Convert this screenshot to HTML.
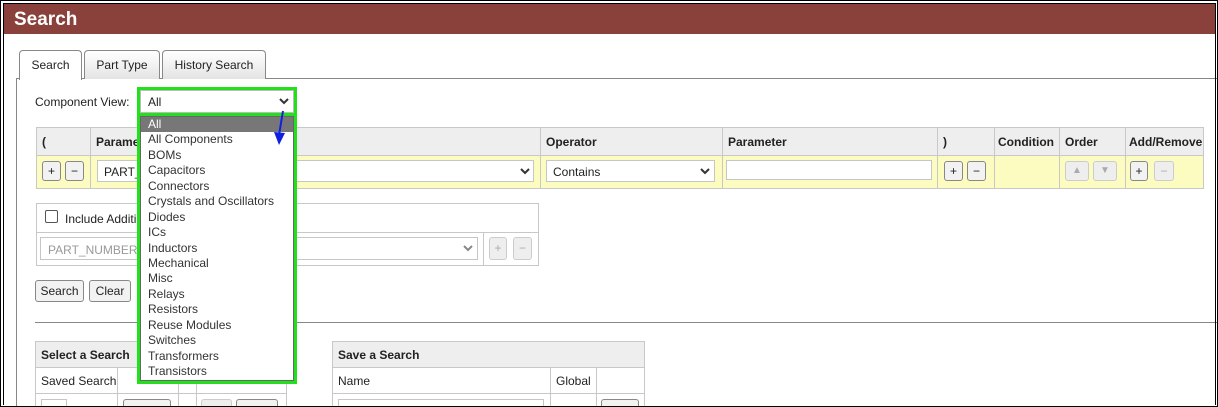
<!DOCTYPE html>
<html><head><style>
*{box-sizing:border-box;margin:0;padding:0}
html,body{width:1218px;height:407px;overflow:hidden;background:#fff}
body{font-family:"Liberation Sans",sans-serif;font-size:12px;color:#222}
#w{position:relative;width:1218px;height:407px;overflow:hidden}
.a{position:absolute}
.frame{left:0;top:0;width:1218px;height:407px;border:1px solid #000;z-index:20}
.inner{left:3px;top:3px;width:1213px;height:402px;border:1px solid #000;border-bottom:none;z-index:20}
.hdr{left:4px;top:4px;width:1211px;height:30px;background:#8a403b;color:#fff;font-weight:bold;font-size:19px;padding:5px 0 0 10px}
.tab{top:50px;height:29px;border:1px solid #888;border-bottom:none;border-radius:4px 4px 0 0;background:linear-gradient(#fff,#e4e4e4);padding:7px 0 0;text-align:center}
.c{border:1px solid #c6c6c6;background:#fff}
.btn{border:1px solid #888;border-radius:3px;background:#f2f2f2;text-align:center;font-size:12px}
.dis{border:1px solid #ccc;border-radius:3px;background:#eee;color:#aaa;text-align:center}
table{border-collapse:collapse;position:absolute;table-layout:fixed}
td,th{border:1px solid #c8c8c8;text-align:left;font-weight:bold;padding:0 5px;white-space:nowrap;overflow:hidden}
.opt{height:15.44px;line-height:15px;padding-left:7px;color:#333}
</style></head><body><div id="w">
<div class="a frame"></div><div class="a inner"></div>
<div class="a hdr">Search</div>
<div class="a" style="left:16px;top:78px;width:1202px;height:329px;border-top:1px solid #888;border-left:1px solid #888"></div>
<div class="a tab" style="left:19px;width:63px;background:#fff;height:30px">Search</div>
<div class="a tab" style="left:84px;width:76px">Part Type</div>
<div class="a tab" style="left:162px;width:104px">History Search</div>

<div class="a" style="left:35px;top:95px">Component View:</div>

<table style="left:36px;top:127px;width:1167px">
<colgroup><col style="width:54px"><col style="width:450px"><col style="width:182px"><col style="width:215px"><col style="width:57px"><col style="width:65px"><col style="width:66px"><col style="width:78px"></colgroup>
<tr style="background:#eee;height:28px"><th>(</th><th>Parameter</th><th>Operator</th><th>Parameter</th><th>)</th><th style="padding:0 3px">Condition</th><th>Order</th><th style="padding:0 3px">Add/Remove</th></tr>
<tr style="background:#fdfcc0;height:33px"><td></td><td></td><td></td><td></td><td></td><td></td><td></td><td></td></tr>
</table>
<div class="a btn" style="left:42px;top:161px;width:19px;height:20px;line-height:18px">+</div>
<div class="a btn" style="left:65px;top:161px;width:19px;height:20px;line-height:18px">−</div>
<div class="a c" style="left:97px;top:160px;width:437px;height:22px;padding:4px 6px">PART_N</div>
<div class="a c" style="left:546px;top:160px;width:169px;height:22px;padding:4px 6px">Contains</div>
<svg class="a" style="left:520px;top:168px" width="10" height="7"><path d="M1 1l4 4 4-4" stroke="#333" stroke-width="2" fill="none"/></svg>
<svg class="a" style="left:700px;top:168px" width="10" height="7"><path d="M1 1l4 4 4-4" stroke="#333" stroke-width="2" fill="none"/></svg>
<div class="a c" style="left:726px;top:160px;width:206px;height:20px"></div>
<div class="a btn" style="left:944px;top:161px;width:19px;height:20px;line-height:18px">+</div>
<div class="a btn" style="left:967px;top:161px;width:19px;height:20px;line-height:18px">−</div>
<div class="a dis" style="left:1065px;top:161px;width:24px;height:20px;line-height:18px;font-size:10px">▲</div>
<div class="a dis" style="left:1093px;top:161px;width:24px;height:20px;line-height:18px;font-size:10px">▼</div>
<div class="a btn" style="left:1130px;top:161px;width:18px;height:20px;line-height:18px">+</div>
<div class="a dis" style="left:1154px;top:161px;width:20px;height:20px;line-height:18px">−</div>

<div class="a" style="left:36px;top:203px;width:503px;height:63px;border:1px solid #c8c8c8"></div>
<div class="a" style="left:36px;top:232px;width:503px;border-top:1px solid #c8c8c8"></div>
<div class="a" style="left:483px;top:232px;height:34px;border-left:1px solid #c8c8c8"></div>
<div class="a" style="left:45px;top:210px;width:13px;height:13px;border:1px solid #555;border-radius:2px"></div>
<div class="a" style="left:65px;top:212px">Include Additi</div>
<div class="a c" style="left:40px;top:237px;width:438px;height:23px;padding:5px 7px;color:#999">PART_NUMBER</div>
<svg class="a" style="left:463px;top:245px" width="10" height="7"><path d="M1 1l4 4 4-4" stroke="#888" stroke-width="2" fill="none"/></svg>
<div class="a dis" style="left:489px;top:237px;width:18px;height:23px;line-height:21px">+</div>
<div class="a dis" style="left:513px;top:237px;width:19px;height:23px;line-height:21px">−</div>

<div class="a btn" style="left:35px;top:280px;width:49px;height:22px;line-height:20px">Search</div>
<div class="a btn" style="left:89px;top:280px;width:42px;height:22px;line-height:20px">Clear</div>
<div class="a" style="left:35px;top:322px;width:1183px;border-top:1px solid #888"></div>

<table style="left:35px;top:341px;width:251px">
<colgroup><col style="width:82px"><col style="width:61px"><col style="width:18px"><col style="width:90px"></colgroup>
<tr style="background:#eee;height:26px"><th colspan="4">Select a Search</th></tr>
<tr style="height:26px"><td style="font-weight:normal">Saved Search</td><td></td><td></td><td></td></tr>
<tr style="height:26px"><td></td><td></td><td></td><td></td></tr>
</table>
<table style="left:332px;top:341px;width:312px">
<colgroup><col style="width:218px"><col style="width:46px"><col style="width:48px"></colgroup>
<tr style="background:#eee;height:26px"><th colspan="3">Save a Search</th></tr>
<tr style="height:26px"><td style="font-weight:normal">Name</td><td style="font-weight:normal">Global</td><td></td></tr>
<tr style="height:26px"><td></td><td></td><td></td></tr>
</table>
<div class="a btn" style="left:123px;top:399px;width:48px;height:14px"></div>
<div class="a c" style="left:41px;top:399px;width:26px;height:14px"></div>
<div class="a dis" style="left:201px;top:399px;width:31px;height:14px"></div>
<div class="a btn" style="left:236px;top:399px;width:42px;height:14px"></div>
<div class="a c" style="left:338px;top:399px;width:206px;height:14px"></div>
<div class="a btn" style="left:601px;top:399px;width:38px;height:14px"></div>

<div class="a" style="left:137px;top:87px;width:160px;height:29px;border:3px solid #22e11c"></div>
<div class="a c" style="left:140px;top:90px;width:154px;height:23px;padding:4px 7px;border-color:#bbb">All</div>
<svg class="a" style="left:279px;top:98px" width="10" height="7"><path d="M1 1l4 4 4-4" stroke="#333" stroke-width="2" fill="none"/></svg>
<div class="a" style="left:137px;top:113px;width:160px;height:271px;border:3px solid #22e11c;background:#fff">
<div style="border:1px solid #666;height:265px">
<div class="opt" style="background:#777;color:#fff">All</div>
<div class="opt">All Components</div><div class="opt">BOMs</div><div class="opt">Capacitors</div><div class="opt">Connectors</div><div class="opt">Crystals and Oscillators</div><div class="opt">Diodes</div><div class="opt">ICs</div><div class="opt">Inductors</div><div class="opt">Mechanical</div><div class="opt">Misc</div><div class="opt">Relays</div><div class="opt">Resistors</div><div class="opt">Reuse Modules</div><div class="opt">Switches</div><div class="opt">Transformers</div><div class="opt">Transistors</div>
</div></div>
<svg class="a" style="left:270px;top:108px" width="20" height="40"><path d="M13 3L9 27" stroke="#1020e0" stroke-width="2"/><path d="M4 24l5 13 6-12z" fill="#1020e0"/></svg>
</div></body></html>
